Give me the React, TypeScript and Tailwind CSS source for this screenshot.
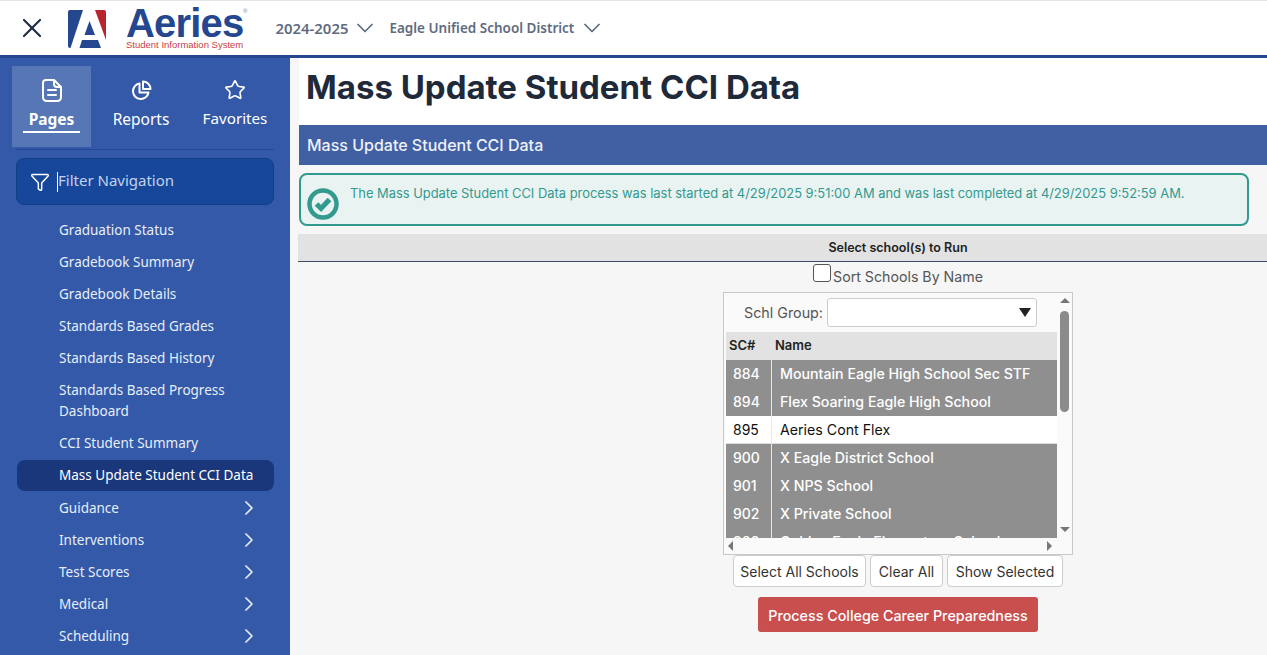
import { ChevronDown, ChevronRight, X, Star, Funnel } from "lucide-react";

const navLinks = [
  "Graduation Status",
  "Gradebook Summary",
  "Gradebook Details",
  "Standards Based Grades",
  "Standards Based History",
  "Standards Based Progress Dashboard",
  "CCI Student Summary",
];

const navGroups = ["Guidance", "Interventions", "Test Scores", "Medical", "Scheduling"];

const schools = [
  { id: "884", name: "Mountain Eagle High School Sec STF", selected: true },
  { id: "894", name: "Flex Soaring Eagle High School", selected: true },
  { id: "895", name: "Aeries Cont Flex", selected: false },
  { id: "900", name: "X Eagle District School", selected: true },
  { id: "901", name: "X NPS School", selected: true },
  { id: "902", name: "X Private School", selected: true },
  { id: "909", name: "Golden Eagle Elementary School", selected: true },
];

function Logo() {
  return (
    <div className="flex items-start ml-[22px]">
      <svg width="38" height="38" viewBox="0 0 38 38" className="mt-[10px] shrink-0">
        <path d="M2 0H15L2.5 38H2Q0 38 0 36V2Q0 0 2 0Z" fill="#24478f" />
        <path d="M27 0H36Q38 0 38 2V30Z" fill="#b9252c" />
        <path d="M21.5 11L27 25H16.5Z" fill="#24478f" />
        <path d="M14 30H30L33 38H11.5Z" fill="#24478f" />
      </svg>
      <div className="ml-[20px] flex flex-col relative font-['Liberation_Sans',sans-serif]">
        <span className="text-[40px] leading-[36px] mt-[5px] font-bold tracking-[-0.8px] text-[#24478f]">
          Aeries
        </span>
        <span className="text-[9.5px] leading-[10px] -mt-px text-[#c9404a] whitespace-nowrap">
          Student Information System
        </span>
        <span className="absolute left-[117px] top-[7px] text-[6px] leading-[8px] text-[#5f7fb5]">®</span>
      </div>
    </div>
  );
}

function Sidebar() {
  return (
    <aside className="w-[290px] shrink-0 bg-[#3359a8] text-white font-['Noto_Sans',sans-serif] overflow-hidden">
      <div className="flex pt-2 pl-3">
        <div className="w-[79px] h-[81px] bg-[#5776b5] flex flex-col items-center pt-[13px]">
          <svg width="20" height="23" viewBox="0 0 20 23" fill="none" stroke="currentColor" strokeWidth="2" strokeLinejoin="round" strokeLinecap="round">
            <path d="M4 1H12L19 8V18Q19 22 15 22H5Q1 22 1 18V4Q1 1 4 1Z" />
            <path d="M12 1V5Q12 8 15 8H19" />
            <path d="M6 11H14M6 16H14" />
          </svg>
          <span className="mt-[6px] text-[15.5px] leading-[22px] font-bold">Pages</span>
          <span className="mt-[1px] w-[57px] h-[2px] bg-white" />
        </div>
        <div className="w-[100px] flex flex-col items-center pt-[13px]">
          <svg width="21" height="21" viewBox="0 0 21 21" fill="none" stroke="currentColor" strokeWidth="2" strokeLinejoin="round" className="mt-px mb-px">
            <path d="M8.5 3.5A7.8 7.8 0 1 0 17.5 12.5H8.5Z" />
            <path d="M12 1.5A7.5 7.5 0 0 1 19.5 9H12Z" />
          </svg>
          <span className="mt-[6px] text-[15.5px] leading-[22px]">Reports</span>
        </div>
        <div className="w-[88px] flex flex-col items-center pt-[13px]">
          <Star size={22} strokeWidth={1.75} />
          <span className="mt-[6px] text-[15.2px] leading-[22px]">Favorites</span>
        </div>
      </div>
      <div className="mx-4 mt-[2px] border-t border-[#234a96]" />
      <div className="mx-4 mt-2 h-[47px] bg-[#16479b] border border-[#123d87] rounded-lg flex items-center pl-[13px]">
        <Funnel size={20} strokeWidth={1.75} />
        <span className="ml-[7px] w-px h-[20px] bg-white" />
        <span className="text-[15px] leading-[20px] -mt-[3px] text-[#c3d2ea]">Filter Navigation</span>
      </div>
      <nav className="mt-[9px] mx-[17px] w-[257px] text-[13.5px] leading-[21px]">
        {navLinks.map((label) => (
          <div key={label} className="pl-[42px] pr-4 py-[5.5px] text-[#e8eef8]">
            {label}
          </div>
        ))}
        <div className="mt-px mb-px pl-[42px] py-[5px] bg-[#19377a] rounded-lg whitespace-nowrap">
          Mass Update Student CCI Data
        </div>
        {navGroups.map((label) => (
          <div key={label} className="pl-[42px] pr-[15px] h-[32px] flex items-center justify-between text-[#e8eef8]">
            {label}
            <ChevronRight size={24} strokeWidth={1.75} className="-mr-[2px]" />
          </div>
        ))}
      </nav>
    </aside>
  );
}

function SchoolPicker() {
  return (
    <div className="w-[350px] h-[263px] bg-[#fafafa] border border-[#c8c8c8] flex flex-col text-[14px] text-[#333]">
      <div className="flex flex-1 min-h-0">
        <div className="w-[333px] pl-[2px] flex flex-col min-h-0">
          <div className="flex items-center h-[29px] mt-[5px] shrink-0">
            <span className="ml-[18px] text-[14.3px] text-[#555]">Schl Group:</span>
            <span className="ml-[4px] w-[210px] h-[29px] bg-white border border-[#ccc] rounded-[3px] flex items-center justify-end pr-[5px]">
              <span className="w-0 h-0 border-x-[6px] border-x-transparent border-t-[9px] border-t-[#222]" />
            </span>
          </div>
          <div className="mt-[5px] flex-1 min-h-0 overflow-hidden">
            <div className="h-[28px] bg-[#e1e2e1] flex items-center font-semibold text-[13px] text-[#222]">
              <span className="w-[49px] pl-[3px]">SC#</span>
              <span>Name</span>
            </div>
            {schools.map((s) => (
              <div key={s.id} className={`h-[28px] flex items-center ${s.selected ? "bg-[#8f8f8f] text-white font-medium" : "bg-white border-b border-[#ddd] text-[#111]"}`}>
                <span className={`w-[46px] h-full pl-[7px] flex items-center border-r border-[#e8e8e8] ${s.selected ? "pb-px" : ""}`}>{s.id}</span>
                <span className={`pl-[8px] whitespace-nowrap text-[14.2px] ${s.selected ? "pb-px" : ""}`}>{s.name}</span>
              </div>
            ))}
          </div>
        </div>
        <div className="flex-1 flex flex-col items-center pt-[5px] pb-[6px]">
          <span className="w-0 h-0 border-x-[5px] border-x-transparent border-b-[5px] border-b-[#777]" />
          <span className="mt-[8px] w-[9px] h-[101px] bg-[#8b8b8b] rounded-full" />
          <span className="mt-auto w-0 h-0 border-x-[5px] border-x-transparent border-t-[5px] border-t-[#777]" />
        </div>
      </div>
      <div className="h-[16px] shrink-0 flex items-center justify-between pl-[4px] pr-[20px]">
        <span className="w-0 h-0 border-y-[5px] border-y-transparent border-r-[5px] border-r-[#777]" />
        <span className="w-0 h-0 border-y-[5px] border-y-transparent border-l-[5px] border-l-[#777]" />
      </div>
    </div>
  );
}

export default function App() {
  return (
    <div className="h-[655px] w-[1267px] overflow-hidden flex flex-col bg-[#f6f6f6] font-['Inter',sans-serif]">
      <header className="h-[58px] shrink-0 bg-white border-t border-[#e6e6e6] border-b-[3px] border-b-[#24478f] flex items-center">
        <X size={32} strokeWidth={1.6} className="ml-4 text-[#1f2d45] shrink-0" />
        <div className="self-start -mt-px -ml-[2px]">
          <Logo />
        </div>
        <div className="ml-[32px] flex items-center font-semibold text-[#5f6b7f] font-['Noto_Sans',sans-serif]">
          <span className="text-[14.9px] mt-px">2024-2025</span>
          <ChevronDown size={28} strokeWidth={1.5} className="ml-[3px]" />
          <span className="ml-[10px] text-[13.5px] mt-px">Eagle Unified School District</span>
          <ChevronDown size={28} strokeWidth={1.5} className="ml-[4px]" />
        </div>
      </header>
      <div className="flex flex-1 min-h-0">
        <Sidebar />
        <main className="flex-1 min-w-0 pl-2 overflow-hidden">
          <div className="w-[1200px]">
            <div className="h-[67px] ml-px bg-white flex items-center pl-[7px] pb-[8px]">
              <h1 className="text-[33px] font-bold text-[#1e2a3a]">Mass Update Student CCI Data</h1>
            </div>
            <div className="h-[40px] ml-px bg-[#4160a3] flex items-center pl-2 text-[16px] font-medium text-[#eef1f8]">
              Mass Update Student CCI Data
            </div>
            <div className="mt-2 ml-px w-[950px] h-[53px] bg-[#e9f3f1] border-2 border-[#339a90] rounded-lg flex text-[12.9px] text-[#339a90]">
              <svg width="32" height="32" viewBox="0 0 32 32" className="ml-[6px] mt-[13px] shrink-0">
                <circle cx="16" cy="16" r="13.5" fill="none" stroke="#339a90" strokeWidth="4.5" />
                <path d="M9.5 16l4.5 4.5L22.5 11.5" fill="none" stroke="#339a90" strokeWidth="5" />
              </svg>
              <span className="ml-[11px] mt-[9px] whitespace-nowrap">
                The Mass Update Student CCI Data process was last started at 4/29/2025 9:51:00 AM and was last completed at 4/29/2025 9:52:59 AM.
              </span>
            </div>
            <div className="mt-2 h-[28px] pt-px bg-[#e1e2e1] border-b border-[#3f4a66] flex items-center justify-center text-[12.5px] font-semibold text-[#222]">
              Select school(s) to Run
            </div>
            <div className="flex flex-col items-center">
              <div className="mt-[2px] h-[28px] flex items-start text-[14.2px] text-[#555]">
                <span className="w-[18px] h-[18px] border border-[#555] rounded-[3px] bg-white" />
                <span className="ml-[2px] mt-[3px] leading-[20px]">Sort Schools By Name</span>
              </div>
              <SchoolPicker />
              <div className="flex gap-1 text-[14px] text-[#333]">
                <button className="w-[133px] h-[32px] bg-white border border-[#ccc] rounded-[4px]">Select All Schools</button>
                <button className="w-[73px] h-[32px] bg-white border border-[#ccc] rounded-[4px]">Clear All</button>
                <button className="w-[116px] h-[32px] bg-white border border-[#ccc] rounded-[4px]">Show Selected</button>
              </div>
              <button className="mt-[10px] w-[280px] h-[35px] pt-[2px] bg-[#c84f4e] rounded-[3px] text-white text-[14.3px] font-medium">
                Process College Career Preparedness
              </button>
            </div>
          </div>
        </main>
      </div>
    </div>
  );
}
